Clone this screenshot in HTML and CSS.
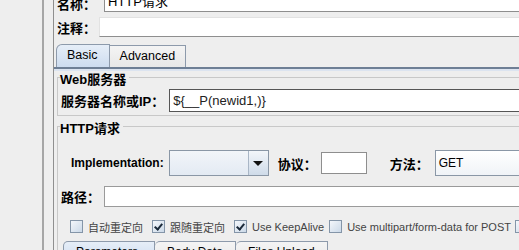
FILE: index.html
```html
<!DOCTYPE html>
<html lang="zh">
<head>
    <meta charset="UTF-8">
    <title>HTTP请求</title>
    <link rel="stylesheet" href="styles.css">
</head>
<body>

    <div class="screen">
        <div class="gutter"></div>
        <div class="splitter"></div>
        <div class="gap"></div>
        <div class="rule"></div>
        <div class="gap2"></div>

        <div class="main">
            <!-- name / comment -->
            <div class="info">
                <div class="info-row name-row">
                    <span class="lbl">名称：</span>
                    <div class="field">HTTP请求</div>
                </div>
                <div class="info-row comment-row">
                    <span class="lbl">注释：</span>
                    <div class="field"></div>
                </div>
            </div>

            <div class="tabs">
                <div class="tab active">Basic</div>
                <div class="tab">Advanced</div>
            </div>

            <div class="tab-body">
                <fieldset class="group">
                    <legend>Web服务器</legend>
                    <div class="server-row">
                        <span class="lbl">服务器名称或IP：</span>
                        <div class="field">${__P(newid1,)}</div>
                    </div>
                </fieldset>

                <fieldset class="group http">
                    <legend>HTTP请求</legend>
                    <div class="impl-row">
                        <span class="lbl impl-lbl">Implementation:</span>
                        <div class="combo">
                            <div class="combo-val"></div>
                            <div class="combo-btn"><span class="arrow"></span></div>
                        </div>
                        <span class="lbl proto-lbl">协议：</span>
                        <div class="field proto"></div>
                        <span class="lbl method-lbl">方法：</span>
                        <div class="method">GET</div>
                    </div>
                    <div class="path-row">
                        <span class="lbl">路径：</span>
                        <div class="field"></div>
                    </div>
                    <div class="checks">
                        <span class="chk"></span><span class="chk-lbl">自动重定向</span>
                        <span class="chk on"></span><span class="chk-lbl">跟随重定向</span>
                        <span class="chk on"></span><span class="chk-lbl ka">Use KeepAlive</span>
                        <span class="chk"></span><span class="chk-lbl wide">Use multipart/form-data for POST</span>
                        <span class="chk"></span>
                    </div>
                    <div class="subtabs">
                        <div class="subtab active">Parameters</div>
                        <div class="subtab">Body Data</div>
                        <div class="subtab">Files Upload</div>
                    </div>
                </fieldset>
            </div>
        </div>
    </div>

</body>
</html>
```

FILE: styles.css
```css
body {
    margin: 0;
    padding: 0;
    background-color: #eeeeee;
    font-family: "Liberation Sans", Arial, "Noto Sans CJK SC", sans-serif;
    font-size: 12px;
    color: #000;
    overflow: hidden;
}

.screen {
    display: flex;
    width: 640px;
    margin-top: -6px;
}

.gutter {
    width: 31px;
    flex: none;
}

.splitter {
    width: 2px;
    flex: none;
    background-image: radial-gradient(#9a9a9a 35%, transparent 40%);
    background-size: 2px 2px;
}

.gap {
    width: 9px;
    flex: none;
}

.rule {
    width: 2px;
    flex: none;
    background-color: #a6a6a6;
}

.gap2 {
    width: 9px;
    flex: none;
}

.main {
    flex: 1;
    border-left: 1px solid #8f8f8f;
}

.lbl {
    font-weight: bold;
    white-space: nowrap;
}

.field {
    background-color: #fff;
    border: 1px solid #8e8e8e;
    border-right: none;
    height: 20px;
    line-height: 20px;
    padding-left: 3px;
    box-sizing: border-box;
}

/* name / comment */
.info-row {
    display: flex;
    align-items: center;
}

.info-row .lbl {
    padding-left: 3px;
    font-size: 13px;
}

.name-row {
    height: 18px;
}

.name-row .field {
    flex: 1;
    margin-left: 8px;
    height: 18px;
    line-height: 16px;
    border-top: none;
    font-size: 13px;
}

.comment-row {
    margin-top: 5px;
    height: 20px;
}

.comment-row .field {
    flex: 1;
    margin-left: 3px;
    height: 20px;
    border-top: 1px solid #e2e2e2;
    border-left-color: #e2e2e2;
}

/* main tabs */
.tabs {
    display: flex;
    margin-top: 8px;
    padding-left: 2px;
    height: 22px;
    align-items: flex-end;
}

.tab {
    height: 21px;
    line-height: 21px;
    padding: 0 10px;
    border: 1px solid #8d9aab;
    border-bottom: none;
    background: linear-gradient(#f4f4f4, #e8e8e8);
    font-size: 12.5px;
}

.tab.active {
    height: 22px;
    border-radius: 6px 0 0 0;
    background: linear-gradient(#e6eef8, #cddcef);
    padding: 0 11px 0 10px;
}

.tab + .tab {
    border-left: none;
}

.tab-body {
    border-top: 2px solid #6e7f95;
    box-shadow: inset 0 2px 0 #dce4f0;
    padding: 0 0 0 3px;
}

.group {
    margin: 0;
    padding: 0 0 3px 3px;
    border: 1px solid #c8c8c8;
    border-right: none;
}

.group legend {
    font-weight: bold;
    font-size: 13px;
    padding: 0 3px 0 0;
    margin-left: -1px;
    height: 17px;
}

.server-row {
    display: flex;
    align-items: center;
    margin-top: 3px;
}

.server-row .lbl {
    font-size: 13px;
}

.server-row .field {
    flex: 1;
    margin-left: 5px;
    height: 23px;
    line-height: 21px;
    border-color: #555;
    font-size: 13px;
    color: #222;
}

.http {
    margin-top: 2px;
    padding-bottom: 0;
}

/* implementation row */
.impl-row {
    display: flex;
    align-items: center;
    margin-top: 15px;
    height: 26px;
}

.impl-lbl {
    margin-left: 10px;
    font-size: 12px;
}

.combo {
    display: flex;
    margin-left: 5px;
    height: 26px;
    border: 1px solid #8a97a6;
    box-sizing: border-box;
}

.combo-val {
    width: 78px;
    background: linear-gradient(#f2f5f9, #e3eaf3);
}

.combo-btn {
    width: 19px;
    border-left: 1px solid #a9b6c6;
    background: linear-gradient(#f3f6fa, #cfdbe9);
    display: flex;
    align-items: center;
    justify-content: center;
}

.arrow {
    width: 0;
    height: 0;
    border-left: 5px solid transparent;
    border-right: 5px solid transparent;
    border-top: 5px solid #111;
}

.proto-lbl {
    margin-left: 9px;
    font-size: 13px;
}

.field.proto {
    width: 46px;
    height: 22px;
    margin-left: 4px;
    border-right: 1px solid #8e8e8e;
}

.method-lbl {
    margin-left: 23px;
    font-size: 13px;
}

.method {
    flex: 1;
    margin-left: 6px;
    height: 26px;
    line-height: 24px;
    padding-left: 3px;
    box-sizing: border-box;
    border: 1px solid #8a97a6;
    border-right: none;
    background: linear-gradient(#ffffff, #f0f3f7);
    font-size: 12px;
}

/* path row */
.path-row {
    display: flex;
    align-items: center;
    margin-top: 10px;
}

.path-row .lbl {
    font-size: 13px;
}

.path-row .field {
    flex: 1;
    margin-left: 4px;
    height: 21px;
    border-color: #9a9a9a;
}

/* checkboxes */
.checks {
    display: flex;
    align-items: center;
    margin-top: 13px;
    margin-left: 9px;
    height: 13px;
    color: #444;
}

.chk {
    width: 11px;
    height: 11px;
    flex: none;
    border: 1px solid #8495a8;
    background: linear-gradient(135deg, #f4f7fb, #cbd9e8);
    position: relative;
}

.chk.on::after {
    content: "";
    position: absolute;
    left: 3px;
    top: 1px;
    width: 3px;
    height: 6px;
    border-right: 2px solid #1b2a3a;
    border-bottom: 2px solid #1b2a3a;
    transform: rotate(40deg);
}

.chk-lbl {
    margin: 0 9px 0 5px;
    white-space: nowrap;
    font-size: 11px;
}

.chk-lbl.ka {
    margin-right: 5px;
}

.chk-lbl.wide {
    width: 155px;
    flex: none;
    margin-right: 13px;
}

/* lower tabs */
.subtabs {
    display: flex;
    margin-top: 8px;
    padding-left: 2px;
}

.subtab {
    height: 20px;
    line-height: 20px;
    padding: 0 12px;
    border: 1px solid #8d9aab;
    border-bottom: none;
    background: linear-gradient(#f4f4f4, #e8e8e8);
    font-size: 12px;
    border-radius: 5px 0 0 0;
}

.subtab.active {
    width: 66px;
    background: linear-gradient(#e6eef8, #cddcef);
}

.subtab + .subtab {
    border-left: none;
}
```
